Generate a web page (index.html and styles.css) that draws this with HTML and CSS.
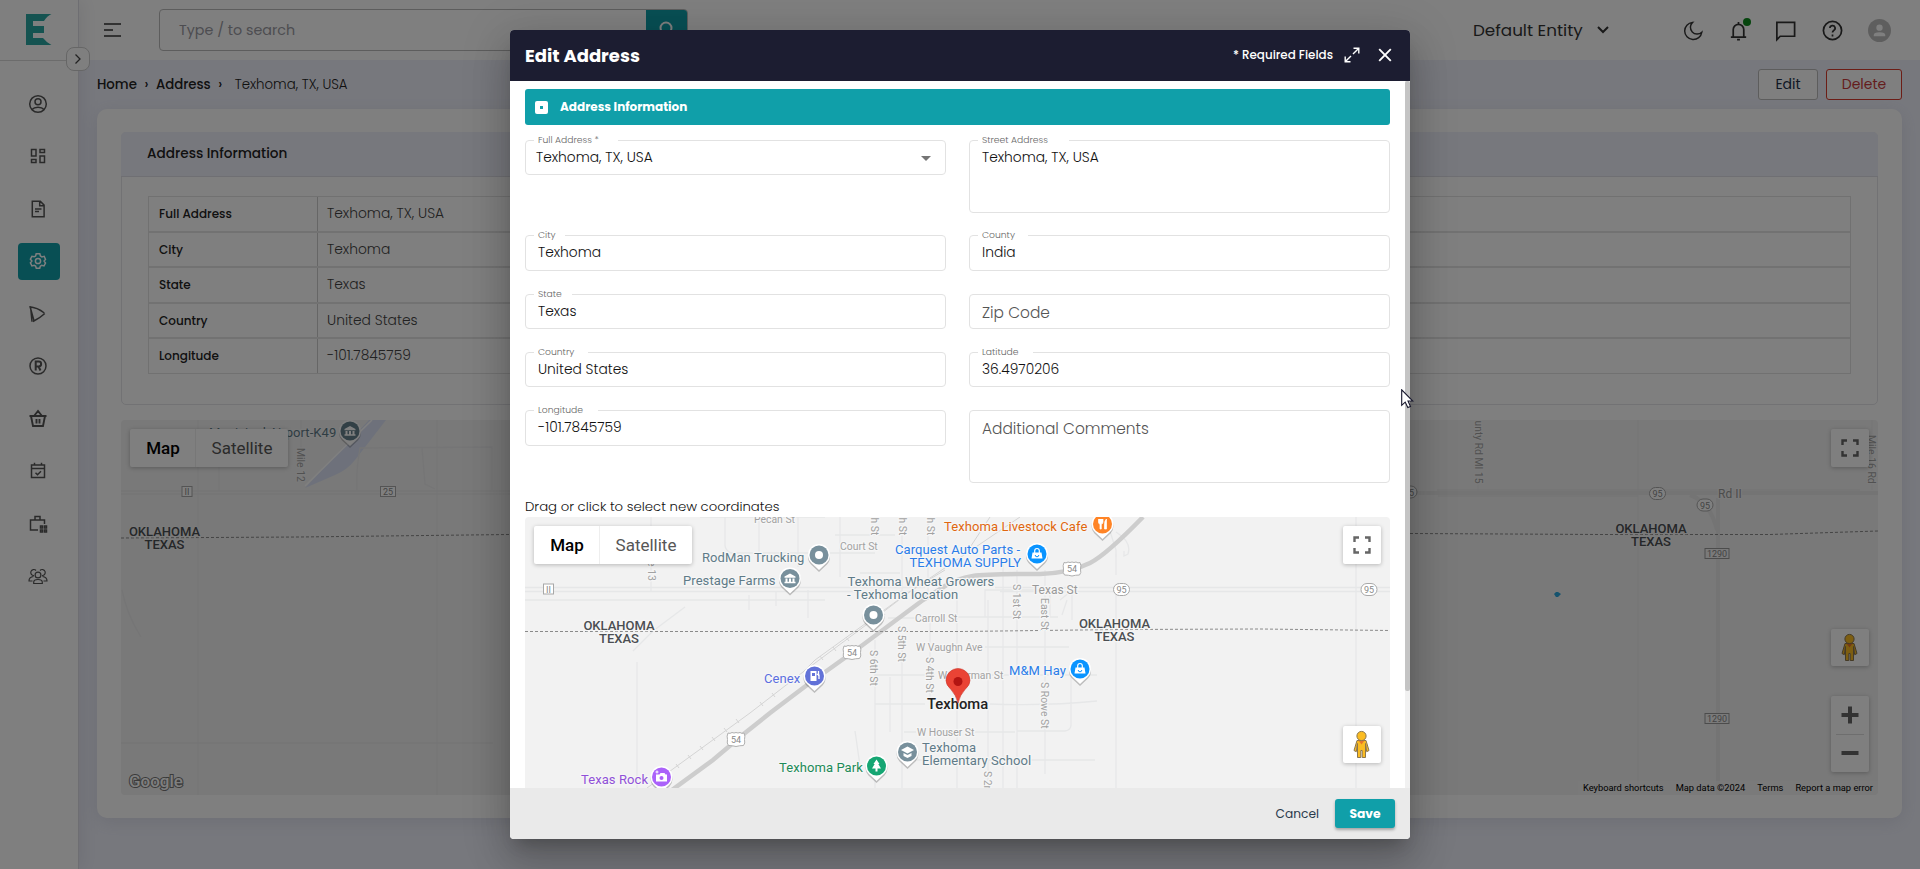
FILE: index.html
```html
<!DOCTYPE html>
<html lang="en">
<head>
<meta charset="utf-8">
<title>Edit Address</title>
<link rel="stylesheet" href="styles.css">
</head>
<body>
<svg class="defs" width="0" height="0" aria-hidden="true">
  <defs>
    <g id="pin-base"><path d="M0 16 L-8 8.500 A11 11 0 1 1 8 8.500 Z" fill="#000" opacity=".22" transform="translate(0 1)"/><path d="M0 15 L-7.500 8 A11 11 0 1 1 7.500 8 Z" fill="#fff"/></g>
    <g id="i-bank" fill="#fff"><path d="M-5.500-2 0-5 5.500-2v1.300h-11zM-4.500 0h2v4h-2zM-1 0h2v4h-2zM2.500 0h2v4h-2zM-5.500 3.300h11V4.800h-11z"/></g>
    <g id="i-bag"><path d="M-4.500-1.500h9l1 6h-11z" fill="#fff"/><path d="M-2.300-1v-2.200a2.300 2.300 0 0 1 4.600 0V-1" fill="none" stroke="#fff" stroke-width="1.200"/><path d="M-1.800 1a1.800 1.800 0 0 0 3.600 0" fill="none" stroke="#0a94ff"/></g>
    <g id="i-pegman" stroke="#8a7650" stroke-width="1"><path d="M-4.500-4h9l3 10-2.300 1.200L4-1V13H.7V6h-1.400v7H-4V-1L-5.200 7.200-7.500 6z" fill="#fbbc22"/><path d="M-3-4h6L0 0z" fill="#e8752a" stroke="none"/><circle cy="-8.500" r="4.600" fill="#fbbc22"/></g>
    <g id="i-full"><path d="M-7.500-3v-4.500H-3M3-7.500h4.500V-3M7.500 3v4.500H3M-3 7.500h-4.500V3" fill="none" stroke="#666" stroke-width="2.400"/></g>
    <g id="s54"><path d="M-8-6q2 1 4-.5 2 1 4 0 2 1 4 0 2 1.500 4 .5 1.500 3 .5 6.500 1 4-1 6-4 0-7.500 1-3.500-1-7.500-1-2-2-1-6-1-3.500.5-6.500z" fill="#fff" stroke="#b0b0b0"/><text y="3.500" class="shield">54</text></g>
    <g id="s95"><rect x="-8" y="-6" width="16" height="12" rx="6" fill="#fff" stroke="#a8a8a8"/><text y="3.500" class="shield">95</text></g>
    <g id="sII"><rect x="-5" y="-5" width="10" height="10" fill="#fff" stroke="#a8a8a8"/><text y="3.500" class="shield">II</text></g>
  </defs>
</svg>

<div class="page">
  <aside class="rail">
    <div class="rail-logo"><svg width="26" height="31" viewBox="0 0 26 31"><path d="M0 0H25.500Q21 2 18 7H7v5h11v7H7v5h10q4 5 8.500 7H0z" fill="#2ba7a2"/></svg></div>
    <nav class="rail-nav">
      <a><svg viewBox="0 0 20 20"><circle cx="10" cy="10" r="8.300"/><circle cx="10" cy="7.800" r="3"/><path d="M4 15.500c2.500-3 9.500-3 12 0"/></svg></a>
      <a><svg viewBox="0 0 20 20"><path d="M3.500 3.500h4.500v6.500H3.500zM12 3.500h4.500v3H12zM12 10h4.500v6.500H12zM3.500 13.500h4.500v3H3.500z"/></svg></a>
      <a><svg viewBox="0 0 20 20"><path d="M4.300 2.300h8l3.800 3.800v11.600H4.300zM11.700 2.500v4.200h4.200M7 10h6.500M7 12.500h4"/></svg></a>
      <a class="active"><svg viewBox="0 0 20 20"><circle cx="10" cy="10" r="2.600"/><path d="M8.200 2.700h3.600l.6 2.300 1.500.9 2.300-.6 1.300 3.100-1.400 1.600 1.400 2-1.500 2.900-2.300-.6-1.400.9-.6 2.100H8.300l-.7-2.200-1.400-.8-2.300.6-1.500-3 1.500-1.900-1.500-1.900 1.500-2.800 2.300.5 1.400-.8z"/></svg></a>
      <a><svg viewBox="0 0 20 20"><path d="M2 2.500 6.200 17.500M1.300 2.800q8 .7 15 6.200M5 17.500Q12 14 16.800 9.500M2.600 3 4 17.800" /></svg></a>
      <a><svg viewBox="0 0 20 20"><circle cx="10" cy="10" r="8"/><path d="M7.700 14.500v-9h3a2.400 2.400 0 0 1 0 4.900h-3M10.500 10.500l2 4" stroke-width="2"/></svg></a>
      <a><svg viewBox="0 0 20 20"><path d="M1.500 7h17M3 7l2 10h10l2-10M6 7l4-5 4 5M8.500 10v4.500M11.500 10v4.500" stroke-width="1.900"/></svg></a>
      <a><svg viewBox="0 0 20 20"><path d="M3.500 4h13v12.500h-13zM3.500 7.500h13M6.500 1.800V4M13.500 1.800V4M7.500 11.800l2 2 3.500-3.600"/></svg></a>
      <a><svg viewBox="0 0 20 20"><path d="M10 16H2.500V6h14v4M7 6V2.500h5V6M12.500 12h2v2h-2zM16.500 12h2v2h-2zM12.500 16h2v2h-2zM16.500 16h2v2h-2z"/></svg></a>
      <a><svg viewBox="0 0 20 20" class="thin"><circle cx="10" cy="9" r="2.900"/><path d="M5.700 17.500v-1.300q0-2.700 4.300-2.700t4.300 2.700v1.300zM6 9.500A3 3 0 1 1 8 4.500M14 9.500a3 3 0 1 0-2-5M5.500 10.500Q1 11 1 15h3.500M14.500 10.500Q19 11 19 15h-3.500"/></svg></a>
    </nav>
    <button class="rail-toggle"><svg width="8" height="12" viewBox="0 0 8 12"><path d="M1.500 1.500 6 6 1.500 10.500" fill="none" stroke="#444" stroke-width="1.300"/></svg></button>
  </aside>

  <div class="main">
    <header class="topbar">
      <svg class="menu" width="18" height="14" viewBox="0 0 18 14"><path d="M0 1h17M0 7h9M0 13h17" stroke="#333" stroke-width="1.700"/></svg>
      <div class="search"><span>Type / to search</span><button><svg width="20" height="20" viewBox="0 0 20 20"><circle cx="9" cy="8" r="5.500" fill="none" stroke="#fff" stroke-width="2"/><path d="m13 12 5 5" stroke="#fff" stroke-width="2"/></svg></button></div>
      <span class="entity">Default Entity</span>
      <svg class="chev" width="12" height="8" viewBox="0 0 12 8"><path d="m1 1 5 5 5-5" fill="none" stroke="#333" stroke-width="2"/></svg>
      <div class="tools">
        <svg class="moon" viewBox="0 0 24 24"><path d="M11 3.500a9 9 0 1 0 9.700 10.300A7 7 0 0 1 11 3.500z"/></svg>
        <div class="bell"><svg viewBox="0 0 24 24"><path d="M4 19h16M6.500 19V11a5.500 5.500 0 0 1 11 0v8M12 3v2.500M10.500 21.500h3"/></svg><i></i></div>
        <svg viewBox="0 0 24 24"><path d="M3 3.500h18.500v14.500H6.500L3 21.500z"/></svg>
        <svg viewBox="0 0 24 24"><circle cx="12" cy="12" r="9.500"/><path d="M9.300 9.500a2.700 2.700 0 1 1 4 2.400q-1.300.8-1.300 2.300M12 16.200v2"/></svg>
        <svg class="avatar" viewBox="0 0 24 24"><circle cx="12" cy="12" r="12"/><circle class="w" cx="12" cy="9" r="3.300"/><path class="w" d="M6 18v-1.200q0-3 6-3t6 3V18z"/></svg>
      </div>
    </header>

    <div class="crumbs">
      <b>Home</b><i>›</i><b>Address</b><i>›</i><span>Texhoma, TX, USA</span>
      <button class="btn">Edit</button><button class="btn danger">Delete</button>
    </div>

    <section class="card">
      <div class="panel">
        <h2>Address Information</h2>
        <div class="table">
          <div class="tr"><b>Full Address</b><span>Texhoma, TX, USA</span></div>
          <div class="tr"><b>City</b><span>Texhoma</span></div>
          <div class="tr"><b>State</b><span>Texas</span></div>
          <div class="tr"><b>Country</b><span>United States</span></div>
          <div class="tr"><b>Longitude</b><span>-101.7845759</span></div>
        </div>
      </div>
      <div class="map map-page">
        <svg class="canvas" viewBox="121 420 1757 375" width="1757" height="375">
          <path d="M305 488 369 420h17l-31 40q-8 10-20 15z" fill="#dce3f6"/>
          <path d="M305 486 372 420" stroke="#fff" stroke-width="1.500"/>
          <g class="road"><path d="M121 491h1296M121 494h1296M219 466v25M198 420v375M437 420v375M301 420v28M357 490q-1-20 3-42l132-1v43M422 448l3 36 10 5M121 743h372M1438 490h422M1438 496h200M1638 420v375M1437 490H1690l22 22M1478 483v8M1872 420v70M122 590q5 25 19 47"/></g>
          <g class="road2"><path d="M1400 493h478M1690 495q20 7 27 35M1718 498v297"/></g>
          <path d="M121 538 300 537 510 534.500" class="border"/><path d="M1410 533.500 1600 534.500H1770L1878 531" class="border"/>
          <text x="209" y="437" class="poi g">Municipal Airport-K49</text>
          <g transform="translate(350 431)"><use href="#pin-base"/><circle r="9.500" fill="#65808c"/><use href="#i-bank"/></g>
          <text transform="translate(296.500 448) rotate(90)" class="st">Mile 12</text>
          <text transform="translate(1474.500 420.500) rotate(90)" class="st" textLength="63">unty Rd MI 15</text>
          <text transform="translate(1867.500 435) rotate(90)" class="st">Mile 16 Rd</text>
          <use href="#sII" x="187" y="491.500"/>
          <g transform="translate(388 491.500)"><rect x="-7.500" y="-5" width="15" height="10" fill="#fff" stroke="#a8a8a8"/><text y="3.500" class="shield">25</text></g>
          <use href="#s95" x="1409" y="492"/><use href="#s95" x="1657.500" y="493.500"/><use href="#s95" x="1705" y="505"/>
          <g transform="translate(1717 553.500)"><rect x="-12" y="-5" width="24" height="10" fill="#f5f5f5" stroke="#999"/><text y="3.500" class="shield">1290</text></g>
          <g transform="translate(1717 718.500)"><rect x="-12" y="-5" width="24" height="10" fill="#f5f5f5" stroke="#999"/><text y="3.500" class="shield">1290</text></g>
          <text x="1718" y="498" class="st big">Rd II</text>
          <g class="region"><text x="164.500" y="536">OKLAHOMA</text><text x="164.500" y="549">TEXAS</text><text x="1651" y="532.500">OKLAHOMA</text><text x="1651" y="545.500">TEXAS</text></g>
          <path d="m1554 594 2-2h2l3 2-3 3h-2z" fill="#2aa6dc"/>
          <text x="129" y="787" class="google">Google</text>
        </svg>
        <div class="maptype"><b>Map</b><span>Satellite</span></div>
        <div class="ctl full"><svg width="38" height="38" viewBox="-19 -19 38 38"><use href="#i-full"/></svg></div>
        <div class="ctl peg"><svg width="38" height="37" viewBox="-18.500 -18.500 38 37"><use href="#i-pegman"/></svg></div>
        <div class="ctl zoom"><svg width="38" height="76" viewBox="0 0 38 76"><path d="M10.500 19h17M19 10.500v17M10.500 57h17" stroke="#666" stroke-width="4"/><path d="M5 38.500h28" stroke="#ddd"/></svg></div>
        <div class="credits"><span>Keyboard shortcuts</span><span>Map data ©2024</span><span>Terms</span><span>Report a map error</span></div>
      </div>
    </section>
  </div>
</div>

<div class="backdrop">
  <div class="dialog">
    <header class="dhead">
      <h1>Edit Address</h1>
      <span class="req">* Required Fields</span>
      <svg width="16" height="16" viewBox="0 0 16 16" fill="none" stroke="#fff" stroke-width="1.400"><path d="M9.500 1.200h5.300v5.300M14.800 1.200 9 7M1.200 9.500v5.300h5.300M1.200 14.800 7 9"/></svg>
      <svg class="x" width="14" height="14" viewBox="0 0 14 14"><path d="M1.200 1.200 12.800 12.800M12.800 1.200 1.200 12.800" stroke="#fff" stroke-width="1.900"/></svg>
    </header>
    <div class="dbody">
      <div class="dcontent">
        <div class="bar"><i></i>Address Information</div>
        <div class="form">
          <div class="field sel"><label class="n84">Full Address *</label>Texhoma, TX, USA<svg width="10" height="5" viewBox="0 0 10 5"><path d="M0 0h10L5 5z" fill="#757575"/></svg></div>
          <div class="field tall"><label class="n91">Street Address</label>Texhoma, TX, USA</div>
          <div class="field h36"><label class="n31">City</label>Texhoma</div>
          <div class="field h36"><label class="n50">County</label>India</div>
          <div class="field"><label class="n38">State</label>Texas</div>
          <div class="field"><span class="ph">Zip Code</span></div>
          <div class="field"><label class="n54">Country</label>United States</div>
          <div class="field"><label class="n55">Latitude</label>36.4970206</div>
          <div class="field h36"><label class="n64">Longitude</label>-101.7845759</div>
          <div class="field tall"><span class="ph">Additional Comments</span></div>
        </div>
        <p class="hint">Drag or click to select new coordinates</p>
        <div class="map map-dialog">
          <svg class="canvas" viewBox="525 517 865 271" width="865" height="271">
            <g class="road">
              <path d="M525 587.500h400M525 591.500h395M995 587.500h395M1000 591.500h390M525 600h300M651 517v75M637 662v126M1116 588v200M1356 517v271M700 517h125M725 517v28q0 5 6 8h144M759 517v40M798 517v50M840 517v60M835 535h60M860 573h40M749 595v15M776 592v14M808 590v28M685 607l-32 24-20 20M855 731l5 35M1108 525l8 25v25M1116 532q16 10 12 22l-4 2v-5"/>
              <path d="M902 517v80M928 517v75M957 600v188M1003 560v228M1017 570v218M1045 570v204M890 677v55M875 640v148M902 650v138M930 620v80M988 600v188M1071 675v50q0 5-6 6h-48M1072 585v35M985 590h65v27H985zM1060 600l15-12M1062 615l5-15M888 618h27M958 617h100M985 647h84M985 675h112M875 675h60M875 704h50M990 704q60 2 107-3M904 732h12M975 732h40M904 760h115M1030 760h65"/>
            </g>
            <g class="rail-line"><path d="M647 788 677 766 750 713 803 672 815 660 905 595 1020 517M803 672 870 622 912 590 945 570M965 555 990 517"/><path d="m676 764 3 4M688 755l3 4M700 746l3 4M712 737l3 4M724 728l3 4M736 719l3 4M760 702l3 4M772 693l3 4M820 656l3 4M833 647l3 4M846 637l3 4M882 611l3 4"/></g>
            <path d="M672 790 713 760 745 733 770 713 807 685 860 647 923 600 945 586Q956 579 973 576 985 574 1040 574 1070 573 1090 563 1106 555 1143 517" fill="none" stroke="#cdcdcd" stroke-width="4.500"/>
            <path d="M525 631.500H960L1120 629.500 1260 629 1390 630.500" class="border"/>
            <g class="st">
              <text x="754" y="523">Pecan St</text><text x="840" y="549.500">Court St</text><text x="915" y="622">Carroll St</text>
              <text x="916" y="651">W Vaughn Ave</text><text x="938" y="679">W Sherman St</text><text x="917" y="736">W Houser St</text>
              <text x="1032" y="594" class="big">Texas St</text>
              <text transform="translate(871 517.500) rotate(90)">h St</text><text transform="translate(899 517.500) rotate(90)">h St</text><text transform="translate(927 517.500) rotate(90)">h St</text>
              <text transform="translate(648 547) rotate(90)">Mile 13</text>
              <text transform="translate(1013 584) rotate(90)">S 1st St</text><text transform="translate(1041 598) rotate(90)">East St</text>
              <text transform="translate(897.500 626) rotate(90)">S 5th St</text><text transform="translate(870 650) rotate(90)">S 6th St</text><text transform="translate(926 657) rotate(90)">S 4th St</text>
              <text transform="translate(1041 682) rotate(90)">S Rowe St</text><text transform="translate(984 771) rotate(90)">S 2n</text>
            </g>
            <use href="#s54" x="1072" y="568.500"/><use href="#s54" x="852" y="652"/><use href="#s54" x="736" y="739"/>
            <use href="#s95" x="1121.500" y="589.500"/><use href="#s95" x="1369" y="589.500"/><use href="#sII" x="548.500" y="589"/>
            <g class="region"><text x="619" y="630">OKLAHOMA</text><text x="619" y="643">TEXAS</text><text x="1114.500" y="627.500">OKLAHOMA</text><text x="1114.500" y="641">TEXAS</text></g>
            <g transform="translate(819 555)"><use href="#pin-base"/><circle r="9.500" fill="#78909c"/><circle r="4" fill="#fff"/></g>
            <g transform="translate(790 578.500)"><use href="#pin-base"/><circle r="9.500" fill="#78909c"/><use href="#i-bank"/></g>
            <g transform="translate(873.500 615)"><use href="#pin-base"/><circle r="9.500" fill="#78909c"/><circle r="4" fill="#fff"/></g>
            <g transform="translate(1102.500 524)"><use href="#pin-base"/><circle r="9.500" fill="#ff8426"/><path d="M-4-5v3q0 2 1.500 2V5h1.300V0Q.5 0 .5-2v-3M-2-5v4M2 5V1q0-5 2-6v10z" fill="#fff" stroke="#fff" stroke-width=".7"/></g>
            <g transform="translate(1037 554)"><use href="#pin-base"/><circle r="9.500" fill="#0a94ff"/><use href="#i-bag"/></g>
            <g transform="translate(1080 669)"><use href="#pin-base"/><circle r="9.500" fill="#0a94ff"/><use href="#i-bag"/></g>
            <g transform="translate(814.500 676)"><use href="#pin-base"/><circle r="9.500" fill="#6272d8"/><path d="M-4-5h6V5h-6z" fill="#fff"/><path d="M-2.500-3h3v3h-3z" fill="#6272d8"/><path d="M2-2l2.500 1v4M4-5v5" stroke="#fff" stroke-width="1.300" fill="none"/></g>
            <g transform="translate(907.500 752)"><use href="#pin-base"/><circle r="9.500" fill="#78909c"/><path d="M-6.500-2 0-5.500 6.500-2 0 1.500zM-4 1 0 3l4-2v3L0 6l-4-2z" fill="#fff"/></g>
            <g transform="translate(876.500 766)"><use href="#pin-base"/><circle r="9.500" fill="#16a673"/><path d="M0-6.500 3-2H1.800L4.500 2.500H1V5.500h-2V2.500h-3.500L-1.800-2H-3z" fill="#fff"/></g>
            <g transform="translate(661.500 777)"><use href="#pin-base"/><circle r="9.500" fill="#ab62fa"/><path d="M-5.500-2.500H-2L-1-4h4l1 1.500h1.500v7h-11z" fill="#fff"/><circle cy="1" r="2" fill="#ab62fa"/><path d="M-4.500-6.500v3M-6-5h3" stroke="#fff"/></g>
            <g class="poi">
              <g class="g"><text x="702" y="561.500">RodMan Trucking</text><text x="683" y="585">Prestage Farms</text><text x="847.500" y="586">Texhoma Wheat Growers</text><text x="847" y="599">- Texhoma location</text><text x="922" y="752">Texhoma</text><text x="922" y="765">Elementary School</text></g>
              <text x="944" y="530.500" fill="#e0670f">Texhoma Livestock Cafe</text>
              <g fill="#2b7de9"><text x="895" y="554">Carquest Auto Parts -</text><text x="909.500" y="567">TEXHOMA SUPPLY</text><text x="1009" y="675">M&amp;M Hay</text></g>
              <text x="764" y="683" fill="#5b6fe0">Cenex</text><text x="779" y="772" fill="#1c8b58">Texhoma Park</text><text x="581" y="783.500" fill="#9050d8">Texas Rock</text>
            </g>
            <text x="927" y="709" class="town">Texhoma</text>
            <path d="M958 703q-2-8-7-13.500-5-4.500-5-9a12 12 0 0 1 24 0q0 4.500-5 9-5 5.500-7 13.500z" fill="#ea4335" stroke="#c9372b" stroke-width=".6"/><circle cx="958" cy="681.500" r="4.500" fill="#b31412"/>
          </svg>
          <div class="maptype"><b>Map</b><span>Satellite</span></div>
          <div class="ctl full"><svg width="38" height="38" viewBox="-19 -19 38 38"><use href="#i-full"/></svg></div>
          <div class="ctl peg"><svg width="38" height="37" viewBox="-18.500 -18.500 38 37"><use href="#i-pegman"/></svg></div>
        </div>
      </div>
      <div class="scroll"><i></i></div>
    </div>
    <footer class="dfoot"><span>Cancel</span><button>Save</button></footer>
  </div>
</div>
<svg class="cursor" width="13" height="21" viewBox="0 0 13 21"><path d="M.7.800v15.500l3.500-3.200 2.600 5.500 2.700-1.200-2.500-5.400h4.800z" fill="#fff" stroke="#15152a" stroke-width="1.100"/></svg>
</body>
</html>
```
FILE: styles.css
```css
* { box-sizing: border-box; }
body { margin: 0; height: 869px; overflow: hidden; font-family: Poppins, Inter, "Open Sans", sans-serif; font-size: 14px; color: #222; }
button { font: inherit; padding: 0; border: 0; }
h1, h2, p { margin: 0; }
svg { display: block; }
.defs { position: absolute; }

.page { display: flex; width: 1920px; height: 869px; background: #eff1fb; }
.rail { position: relative; width: 79px; flex: none; background: #fff; border-right: 1px solid #dcdce4; box-shadow: 4px 0 16px rgba(80,80,110,.1); }
.rail-logo { height: 61px; padding: 14px 0 0 26px; border-bottom: 1px solid #d8d8d8; }
.rail-nav { display: flex; flex-direction: column; gap: 15.500px; padding: 24px 0 0 18px; }
.rail-nav a { width: 42px; height: 37px; border-radius: 4px; display: flex; align-items: center; justify-content: center; padding-right: 2px; }
.rail-nav svg { width: 20px; height: 20px; fill: none; stroke: #555; stroke-width: 1.500; }
.rail-nav .thin { stroke-width: 1.200; }
.rail-nav .active { background: #109fa9; }
.rail-nav .active svg { stroke: #fff; }
.rail-toggle { position: absolute; left: 66px; top: 47px; width: 24px; height: 24px; border: 1px solid #ccc; border-radius: 8px; background: #fff; display: flex; align-items: center; justify-content: center; }

.main { flex: 1; }
.topbar { height: 60px; background: #fff; display: flex; align-items: center; padding-left: 25px; }
.search { width: 529px; height: 42px; margin-left: 37px; border: 1px solid #bbb; border-radius: 4px; display: flex; align-items: center; justify-content: space-between; padding-left: 19px; color: #9a9aa2; overflow: hidden; font-size: 14.300px; }
.search button { width: 41px; height: 42px; background: #109fa9; display: flex; align-items: center; justify-content: center; }
.entity { margin-left: 785px; width: 111px; font-size: 16.800px; color: #333; white-space: nowrap; }
.chev { margin-left: 13px; }
.tools { display: flex; align-items: center; gap: 24px; margin-left: 73px; }
.tools svg { width: 23px; height: 23px; fill: none; stroke: #333; stroke-width: 1.800; }
.tools .moon { stroke-width: 1.500; }
.tools .bell { position: relative; margin-left: -2px; }
.bell i { position: absolute; left: 16px; top: -1px; width: 8px; height: 8px; border-radius: 50%; background: #0d8a1c; }
.tools .avatar { stroke: none; fill: #bdbdbd; }
.avatar .w { fill: #fff; }

.crumbs { display: flex; align-items: center; height: 49px; padding: 0 18px; font-size: 13.300px; color: #222; }
.crumbs b { font-weight: 500; }
.crumbs i { font-style: normal; font-weight: 500; width: 19px; text-align: center; }
.crumbs span { margin-left: 5px; font-size: 13.350px; font-weight: 300; }
.btn { height: 31px; width: 60px; border: 1px solid #bbb; border-radius: 3px; background: #fff; font-size: 14px; color: #23304a; }
.crumbs .btn:first-of-type { margin-left: auto; }
.btn.danger { width: 76px; margin-left: 8px; border-color: #d83a2c; color: #c93a3a; }

.card { margin: 0 18px; height: 709px; background: #fff; border-radius: 10px; padding: 23px 24px; box-shadow: 0 4px 18px rgba(90,90,120,.13); }
.panel { height: 273px; border: 1px solid #e4e4e8; border-radius: 5px; margin-bottom: 15px; }
.panel h2 { height: 45px; line-height: 44px; padding-left: 26px; margin: -1px; background: #eff1fb; border-bottom: 1px solid #dedfe6; font-size: 13.650px; font-weight: 500; border-radius: 5px 5px 0 0; }
.table { margin: 20px 26px 0 26px; border: 1px solid #e2e2e2; }
.tr { display: flex; height: 35.600px; border-bottom: 2px solid #e4e4e4; }
.tr:last-child { border-bottom: 0; height: 34px; }
.tr b { width: 169px; padding-left: 10px; line-height: 34px; font-weight: 500; font-size: 12px; border-right: 1px solid #ccc; }
.tr span { padding-left: 9px; line-height: 32.500px; font-size: 13.850px; font-weight: 300; color: #444; }

.map { position: relative; overflow: hidden; background: #f2f2f2; font-family: Roboto, sans-serif; }
.map-page { height: 375px; border-radius: 4px; }
.map-dialog { height: 271px; border-radius: 4px 4px 0 0; }
.canvas { width: 100%; height: 100%; }
.road { fill: none; stroke: #e6e7e8; stroke-width: 1.300; }
.map-page .road { stroke: #ebebec; }
.road2 { fill: none; stroke: #e8e8e8; stroke-width: 4; }
.rail-line { fill: none; stroke: #d4d4d4; stroke-width: 1; }
.border { fill: none; stroke: #8a8a8a; stroke-width: 1; stroke-dasharray: 3 2; }
.poi { font-size: 13px; letter-spacing: .08px; }
.poi text, text.poi, .st, .region, .town { paint-order: stroke; stroke: #f6f6f6; stroke-width: 2.500px; stroke-linejoin: round; }
.g { fill: #5f7b88; }
.st { font-size: 10.400px; fill: #a2a2a2; }
.big { font-size: 12px; fill: #999; }
.shield { font-size: 9px; fill: #888; stroke: none; text-anchor: middle; }
.region { font-size: 13px; font-weight: 500; fill: #4b4e52; text-anchor: middle; }
.town { font-size: 14.800px; font-weight: 500; fill: #222; }
.google { font: 500 17px Roboto, sans-serif; fill: #fff; stroke: #777; stroke-width: 2px; paint-order: stroke; }
.maptype { position: absolute; left: 9px; top: 9px; display: flex; height: 38px; line-height: 38px; background: #fff; border-radius: 2px; box-shadow: 0 1px 4px rgba(0,0,0,.25); font-size: 17px; color: #565656; text-align: center; }
.maptype b { width: 66px; font-weight: 500; color: #000; border-right: 1px solid #eee; padding-left: 1px; }
.maptype span { width: 92px; }
.ctl { position: absolute; right: 9px; width: 38px; height: 38px; background: #fff; border-radius: 2px; box-shadow: 0 1px 4px rgba(0,0,0,.25); }
.ctl.full { top: 9px; }
.ctl.peg { top: 209px; height: 37px; }
.ctl.zoom { top: 276px; height: 76px; }
.credits { position: absolute; right: 0; bottom: 0; height: 14px; line-height: 14px; display: flex; gap: 12px; padding: 0 5px; background: rgba(245,245,245,.7); font-size: 9.300px; color: #000; }

.backdrop { position: absolute; inset: 0; background: rgba(0,0,0,.5); padding: 30px 510px; }
.dialog { width: 900px; height: 809px; border-radius: 4px; overflow: hidden; background: #fff; display: flex; flex-direction: column; box-shadow: 0 11px 15px -7px rgba(0,0,0,.2), 0 24px 38px 3px rgba(0,0,0,.14), 0 9px 46px 8px rgba(0,0,0,.12); }
.dhead { height: 51px; background: #1c1d31; color: #fff; display: flex; align-items: center; padding: 0 18px 1px 15px; }
.dhead h1 { font-size: 18px; font-weight: 700; margin-right: auto; }
.req { font-size: 11.900px; font-weight: 500; margin-right: 11px; }
.dhead .x { margin-left: 18px; }
.dbody { flex: 1; min-height: 0; display: flex; }
.dcontent { width: 895px; padding: 8px 15px 0; }
.scroll { width: 5px; background: #f1f1f1; }
.scroll i { display: block; height: 610px; background: #c4c4c4; border-radius: 2px; }
.bar { height: 36px; background: #109fa9; border-radius: 3px; color: #fff; font-size: 12px; font-weight: 700; display: flex; align-items: center; padding-left: 10px; }
.bar i { width: 13px; height: 13px; border-radius: 2px; margin-right: 12px; background: radial-gradient(circle at center, #109fa9 1.400px, #fff 1.800px); }
.form { display: grid; grid-template-columns: 421px 421px; column-gap: 23px; grid-template-rows: 95px 59px 58px 58px 74px; padding-top: 15px; align-items: start; }
.field { position: relative; height: 35px; line-height: 33px; border: 1px solid #e2e2e2; border-radius: 4px; padding-left: 12px; font-size: 13.800px; font-weight: 300; color: #111; }
.field.h36 { height: 36px; line-height: 33px; }
.field.sel { padding-left: 10px; }
.field.tall { height: 73px; line-height: 34px; }
.field label { position: absolute; left: 8px; top: -8px; height: 14px; line-height: 13px; padding-left: 4px; background: #fff; font-size: 9.200px; color: #666; white-space: nowrap; }
.n84 { width: 84px; } .n91 { width: 91px; } .n31 { width: 31px; } .n50 { width: 50px; } .n38 { width: 38px; } .n54 { width: 54px; } .n55 { width: 55px; } .n64 { width: 64px; }
.field svg { position: absolute; right: 14px; top: 15px; }
.ph { font-size: 15.400px; color: #555; line-height: 36px; }
.hint { height: 33px; line-height: 25px; padding-top: 10px; font-size: 13.250px; font-weight: 300; color: #111; }
.dfoot { height: 51px; background: #eaeaea; display: flex; align-items: center; justify-content: flex-end; padding-right: 15px; font-size: 12.200px; color: #2b3b4d; }
.dfoot button { width: 60px; height: 29px; margin-left: 16px; background: #109fa9; border-radius: 3px; color: #fff; font-weight: 700; font-size: 12.300px; box-shadow: 0 2px 3px rgba(0,0,0,.3); }
.cursor { position: absolute; left: 1401px; top: 389px; }
```
